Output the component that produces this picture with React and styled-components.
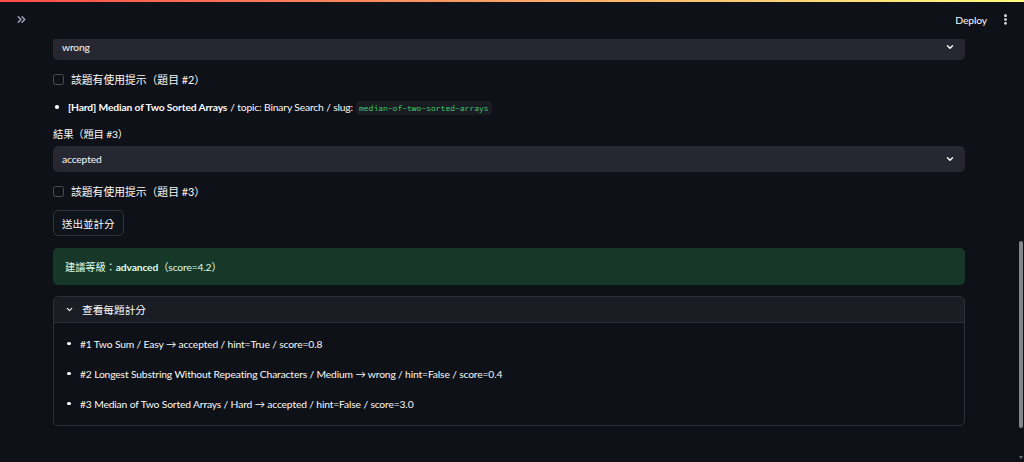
import React from 'react'
import styled, { createGlobalStyle } from 'styled-components'
import { ChevronsRight, ChevronDown, EllipsisVertical } from 'lucide-react'

const GlobalStyle = createGlobalStyle`
    html, body {
        margin: 0;
        padding: 0;
        background: #0e1117;
        overflow: hidden;
    }
    body {
        font-family: "Source Sans Pro", Lato, "Noto Sans CJK TC", sans-serif;
        font-size: 10.3px;
        letter-spacing: -0.15px;
        color: #fafafa;
    }
`

const Decoration = styled.div`
    position: fixed;
    top: 0;
    left: 0;
    right: 0;
    height: 2px;
    background: linear-gradient(90deg, #ff4b4b, #fffd80);
    z-index: 3;
`

const Header = styled.header`
    position: fixed;
    top: 0;
    left: 0;
    right: 0;
    height: 39px;
    background: #0e1117;
    display: flex;
    align-items: center;
    justify-content: space-between;
    padding: 0 12px 0 15px;
    box-sizing: border-box;
    z-index: 2;
`

const SidebarToggle = styled.div`
    display: flex;
    align-items: center;
    color: #a3a8b8;
`

const HeaderActions = styled.div`
    display: flex;
    align-items: center;
    gap: 12px;
    color: #fafafa;
`

const DeployLink = styled.span`
    font-size: 10.4px;
`

const Main = styled.main`
    display: flex;
    flex-direction: column;
    gap: 11px;
    padding: 34px 59px 0 53px;
`

const Field = styled.div`
    display: flex;
    flex-direction: column;
    gap: 5px;
`

const FieldLabel = styled.label`
    height: 14px;
    line-height: 14px;
`

const SelectBox = styled.div`
    height: 26px;
    background: #262730;
    border-radius: 5px;
    display: flex;
    align-items: center;
    justify-content: space-between;
    padding: 0 10px 0 9px;
    box-sizing: border-box;
`

const CheckRow = styled.div`
    height: 16px;
    display: flex;
    align-items: center;
    gap: 7px;
    font-size: 10.8px;
    letter-spacing: 0;
`

const CheckBox = styled.span`
    width: 11px;
    height: 11px;
    box-sizing: border-box;
    border: 1px solid #4b4e57;
    border-radius: 2.5px;
`

const BulletList = styled.ul`
    margin: 0;
    padding: 0 0 0 2px;
    list-style: none;
    display: flex;
    flex-direction: column;
    gap: ${p => p.$gap || 0}px;
`

const BulletItem = styled.li`
    height: ${p => p.$height || 18}px;
    display: flex;
    align-items: center;
    gap: 9.5px;
    white-space: nowrap;
    &::before {
        content: '';
        width: 3.5px;
        height: 3.5px;
        border-radius: 50%;
        background: #fafafa;
        flex-shrink: 0;
    }
`

const Strong = styled.strong`
    font-weight: 700;
    margin-right: 3px;
`

const Code = styled.code`
    font-family: "Source Code Pro", "DejaVu Sans Mono", "Liberation Mono", monospace;
    font-size: 8px;
    letter-spacing: 0;
    color: #3dd56d;
    background: #1a1c24;
    border-radius: 3px;
    padding: 2px 3px;
    margin-left: 3px;
`

const Button = styled.button`
    align-self: flex-start;
    height: 26px;
    padding: 0 8px;
    background: #0f131a;
    color: #fafafa;
    border: 1px solid #30333b;
    border-radius: 5px;
    font-family: inherit;
    font-size: 10.5px;
`

const SuccessBox = styled.div`
    height: 37px;
    margin-top: 1px;
    background: #173828;
    color: #dffde9;
    border-radius: 5px;
    display: flex;
    align-items: center;
    padding: 0 12px;
    b {
        font-weight: 700;
    }
`

const Expander = styled.div`
    border: 1px solid #2c2f37;
    border-radius: 5px;
    overflow: hidden;
`

const ExpanderHeader = styled.div`
    height: 25px;
    background: #1b1d25;
    border-bottom: 1px solid #2c2f37;
    display: flex;
    align-items: center;
    gap: 8px;
    padding-left: 11px;
    font-size: 10.67px;
    letter-spacing: 0;
`

const ExpanderBody = styled.div`
    padding: 12px 0 13px 11px;
`

const ScrollTrack = styled.div`
    position: fixed;
    right: 1px;
    top: 241px;
    width: 4px;
    height: 187px;
    background: #85878c;
    border-radius: 2px;
`

const ScrollArrow = styled.div`
    position: fixed;
    right: 1px;
    bottom: 3px;
    width: 0;
    height: 0;
    border-left: 2.5px solid transparent;
    border-right: 2.5px solid transparent;
    border-top: 3px solid #6b6d72;
`

const scores = [
    '#1 Two Sum / Easy → accepted / hint=True / score=0.8',
    '#2 Longest Substring Without Repeating Characters / Medium → wrong / hint=False / score=0.4',
    '#3 Median of Two Sorted Arrays / Hard → accepted / hint=False / score=3.0',
]

function App() {
    return (
        <>
            <GlobalStyle />
            <Decoration />
            <Header>
                <SidebarToggle>
                    <ChevronsRight size={13} strokeWidth={2.6} />
                </SidebarToggle>
                <HeaderActions>
                    <DeployLink>Deploy</DeployLink>
                    <EllipsisVertical size={13} strokeWidth={3} />
                </HeaderActions>
            </Header>

            <Main>
                <SelectBox>
                    <span>wrong</span>
                    <ChevronDown size={10} strokeWidth={3.5} />
                </SelectBox>
                <CheckRow>
                    <CheckBox />
                    <span>該題有使用提示（題目 #2）</span>
                </CheckRow>
                <BulletList>
                    <BulletItem>
                        <span>
                            <Strong>[Hard] Median of Two Sorted Arrays</Strong>/ topic: Binary Search / slug:
                            <Code>median-of-two-sorted-arrays</Code>
                        </span>
                    </BulletItem>
                </BulletList>
                <Field>
                    <FieldLabel>結果（題目 #3）</FieldLabel>
                    <SelectBox>
                        <span>accepted</span>
                        <ChevronDown size={10} strokeWidth={3.5} />
                    </SelectBox>
                </Field>
                <CheckRow>
                    <CheckBox />
                    <span>該題有使用提示（題目 #3）</span>
                </CheckRow>
                <Button>送出並計分</Button>
                <SuccessBox>
                    <span>建議等級：<b>advanced</b>（score=4.2）</span>
                </SuccessBox>
                <Expander>
                    <ExpanderHeader>
                        <ChevronDown size={9} strokeWidth={3} />
                        <span>查看每題計分</span>
                    </ExpanderHeader>
                    <ExpanderBody>
                        <BulletList $gap={13}>
                            {scores.map((s, i) => (
                                <BulletItem key={i} $height={17}>{s}</BulletItem>
                            ))}
                        </BulletList>
                    </ExpanderBody>
                </Expander>
            </Main>

            <ScrollTrack />
            <ScrollArrow />
        </>
    )
}

export default App
